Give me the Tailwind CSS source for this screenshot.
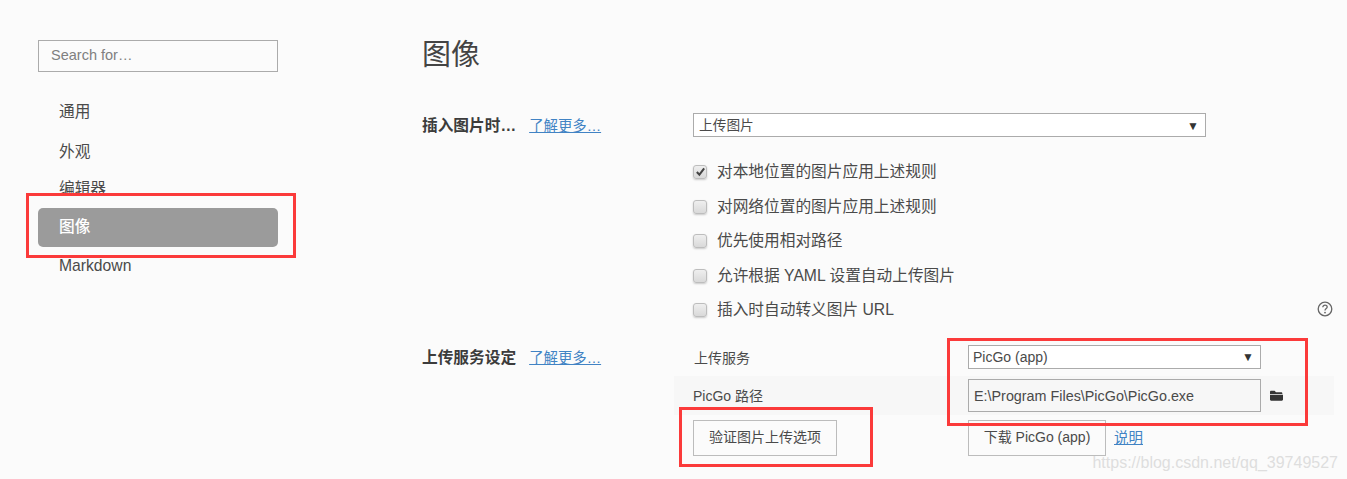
<!DOCTYPE html>
<html lang="zh-CN">
<head>
    <meta charset="UTF-8">
    <meta name="viewport" content="width=device-width, initial-scale=1.0">
    <title>图像</title>
    <script src="https://cdn.jsdelivr.net/npm/@tailwindcss/browser@4"></script>
</head>
<body class="relative h-[479px] overflow-hidden bg-[#fbfbfb] text-[#4a4a4a] font-['Liberation_Sans','Noto_Sans_CJK_SC',sans-serif]">
<div class="flex h-full">
    <!-- sidebar -->
    <aside class="w-[422px] shrink-0 pl-[38px] pt-[40px]">
        <input type="text" placeholder="Search for…" class="block w-[240px] h-[32px] px-3 pb-[2px] border border-[#ababab] bg-[#fbfbfb] text-[14.5px] placeholder:text-[#808080]">
        <nav class="w-[240px] mt-[20px] text-[15.7px]">
            <div class="h-[39px] pl-[21px] pt-px flex items-center">通用</div>
            <div class="h-[39px] pl-[21px] pt-[3px] flex items-center">外观</div>
            <div class="h-[38px] pl-[21px] flex items-center">编辑器</div>
            <div class="h-[39px] pl-[21px] pb-[2px] flex items-center bg-[#9b9b9b] rounded-[5px] text-white font-medium">图像</div>
            <div class="h-[35px] pl-[21px] pt-[2px] flex items-center">Markdown</div>
        </nav>
    </aside>

    <!-- main -->
    <main class="flex-1 pt-[36px]">
        <h1 class="h-[38px] text-[29px] leading-[38px] text-[#444]">图像</h1>

        <section class="grid grid-cols-[271px_1fr] mt-[39px]">
            <div class="flex items-center h-[24px] pt-[2px]">
                <span class="text-[15.7px] font-bold text-[#3c3c3c]">插入图片时…</span>
                <a class="ml-[13px] pt-px text-[14.4px] text-[#4183c4] underline">了解更多…</a>
            </div>
            <div>
                <div class="flex items-center justify-between w-[513px] h-[24px] pl-[5px] pr-[6px] pt-[2px] bg-white border border-[#ababab] text-[13.7px]">
                    <span>上传图片</span><span class="text-[12px] text-[#333]">▼</span>
                </div>
                <div class="relative mt-[17.5px] text-[15.7px]">
                    <label class="flex items-center h-[34.5px]">
                        <span class="flex items-center justify-center w-[14px] h-[14px] mr-[10px] rounded-[3px] border border-[#bdbdbd] bg-linear-to-b from-[#efefef] to-[#d9d9d9] shadow-[0_1px_2px_rgba(0,0,0,0.2)]">
                            <svg viewBox="0 0 12 12" class="w-[11px] h-[11px]"><path d="M2 6.5 L4.8 9.5 L10 2.5" fill="none" stroke="#444" stroke-width="2.2"/></svg>
                        </span>对本地位置的图片应用上述规则
                    </label>
                    <label class="flex items-center h-[34.5px] pt-px">
                        <span class="w-[14px] h-[14px] mr-[10px] rounded-[3px] border border-[#bdbdbd] bg-linear-to-b from-[#efefef] to-[#d9d9d9] shadow-[0_1px_2px_rgba(0,0,0,0.2)]"></span>对网络位置的图片应用上述规则
                    </label>
                    <label class="flex items-center h-[34.5px]">
                        <span class="w-[14px] h-[14px] mr-[10px] rounded-[3px] border border-[#bdbdbd] bg-linear-to-b from-[#efefef] to-[#d9d9d9] shadow-[0_1px_2px_rgba(0,0,0,0.2)]"></span>优先使用相对路径
                    </label>
                    <label class="flex items-center h-[34.5px] pt-px">
                        <span class="w-[14px] h-[14px] mr-[10px] rounded-[3px] border border-[#bdbdbd] bg-linear-to-b from-[#efefef] to-[#d9d9d9] shadow-[0_1px_2px_rgba(0,0,0,0.2)]"></span>允许根据 YAML 设置自动上传图片
                    </label>
                    <label class="flex items-center h-[34.5px]">
                        <span class="w-[14px] h-[14px] mr-[10px] rounded-[3px] border border-[#bdbdbd] bg-linear-to-b from-[#efefef] to-[#d9d9d9] shadow-[0_1px_2px_rgba(0,0,0,0.2)]"></span>插入时自动转义图片 URL
                    </label>
                    <svg viewBox="0 0 16 16" class="absolute right-[14px] top-[146px] w-[16px] h-[16px]">
                        <circle cx="8" cy="8" r="6.8" fill="none" stroke="#666" stroke-width="1.3"/>
                        <path d="M5.8 6.3 C5.8 4.9 6.8 4.1 8 4.1 C9.3 4.1 10.2 4.9 10.2 6 C10.2 7.4 8 7.6 8 9.5" fill="none" stroke="#666" stroke-width="1.3"/>
                        <circle cx="8" cy="11.6" r="0.9" fill="#666"/>
                    </svg>
                </div>
            </div>
        </section>

        <section class="grid grid-cols-[271px_1fr] mt-[18px]">
            <div class="flex items-center h-[24px] pt-[2px]">
                <span class="text-[15.7px] font-bold text-[#3c3c3c]">上传服务设定</span>
                <a class="ml-[13px] pt-px text-[14.4px] text-[#4183c4] underline">了解更多…</a>
            </div>
            <div class="text-[14px]">
                <div class="grid grid-cols-[275px_293px] items-center h-[24px]">
                    <span class="pl-px pt-[2px]">上传服务</span>
                    <div class="flex items-center justify-between h-[24px] pl-[4px] pr-[6px] bg-white border border-[#ababab] text-[14px]">
                        <span>PicGo (app)</span><span class="text-[12px] text-[#333]">▼</span>
                    </div>
                </div>
                <div class="grid grid-cols-[275px_293px_auto] items-center h-[39px] mt-[7px] -ml-[19px] pl-[19px] w-[660px] bg-[#f7f7f7]">
                    <span class="pt-[2px]">PicGo 路径</span>
                    <div class="flex items-center h-[33px] px-[5px] pt-[2px] border border-[#ababab] bg-[#f7f7f7] text-[14.35px]">E:\Program Files\PicGo\PicGo.exe</div>
                    <svg viewBox="0 0 16 14" class="ml-[8px] w-[15px] h-[13px]"><path d="M1 3.2 C1 2.4 1.5 2 2.2 2 H6 L7.4 3.4 H13 C13.8 3.4 14.3 3.9 14.3 4.6 V5.4 H1 Z M1 6.2 H15 V11.4 C15 12.2 14.5 12.6 13.8 12.6 H2.2 C1.5 12.6 1 12.2 1 11.4 Z" fill="#333"/></svg>
                </div>
                <div class="grid grid-cols-[275px_auto] items-start mt-[5px]">
                    <button class="w-[144px] h-[36px] pb-[2px] border border-[#bcbcbc] text-center">验证图片上传选项</button>
                    <div class="flex items-center">
                        <button class="w-[138px] h-[36px] pb-[2px] border border-[#bcbcbc] text-center">下载 PicGo (app)</button>
                        <a class="ml-[8px] pt-[2px] text-[14.5px] text-[#4183c4] underline">说明</a>
                    </div>
                </div>
            </div>
        </section>
    </main>
</div>

<!-- annotations drawn over the screenshot -->
<div class="absolute left-[26px] top-[193px] w-[270px] h-[65px] border-[3px] border-[#fb3a3a]"></div>
<div class="absolute left-[947px] top-[338px] w-[361px] h-[88px] border-[3px] border-[#fb3a3a]"></div>
<div class="absolute left-[679px] top-[407px] w-[194px] h-[60px] border-[3px] border-[#fb3a3a]"></div>
<div class="absolute right-[9px] top-[451px] text-[16px] text-[#dedede]">https://blog.csdn.net/qq_39749527</div>
</body>
</html>
